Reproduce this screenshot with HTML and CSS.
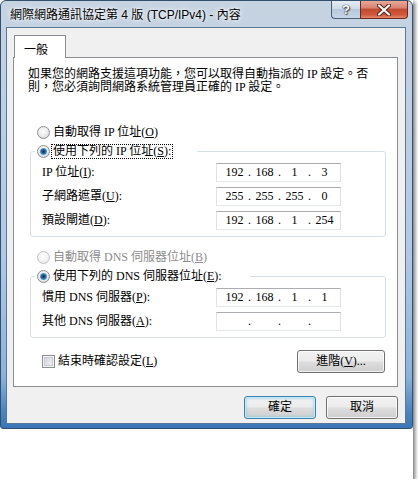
FILE: index.html
```html
<!DOCTYPE html>
<html lang="zh-Hant">
<head>
<meta charset="utf-8">
<title>TCP/IPv4 內容</title>
<link rel="stylesheet" href="styles.css">
</head>
<body>
<div class="shot">
  <div class="window">
    <div class="titlebar">
      <span class="title">網際網路通訊協定第 4 版 (TCP/IPv4) - 內容</span>
      <div class="cbtn help">?</div>
      <div class="cbtn close">
        <svg width="14" height="12" viewBox="0 0 14 12"><path d="M2 1.5 L12 10.5 M12 1.5 L2 10.5" stroke="#5b2216" stroke-width="4.2" stroke-linecap="round"/><path d="M2 1.5 L12 10.5 M12 1.5 L2 10.5" stroke="#fff" stroke-width="2.2" stroke-linecap="round"/></svg>
      </div>
    </div>
    <div class="client">
      <div class="tabstrip"><div class="tab">一般</div></div>
      <div class="panel">
        <p class="desc"><span>如果您的網路支援這項功能，您可以取得自動指派的 IP 設定。否</span><span>則，您必須詢問網路系統管理員正確的 IP 設定。</span></p>
        <div class="opt first"><span class="radio"></span><span class="otext">自動取得 IP 位址(<u>O</u>)</span></div>
        <fieldset class="group g1">
          <legend class="leg w1"><span class="opt"><span class="radio on"></span><span class="otext focus">使用下列的 IP 位址(<u>S</u>):</span></span></legend>
          <div class="rows">
            <span class="lbl">IP 位址(<u>I</u>):</span>
            <div class="ip"><span>192</span><i>.</i><span>168</span><i>.</i><span>1</span><i>.</i><span>3</span></div>
            <span class="lbl">子網路遮罩(<u>U</u>):</span>
            <div class="ip"><span>255</span><i>.</i><span>255</span><i>.</i><span>255</span><i>.</i><span>0</span></div>
            <span class="lbl">預設閘道(<u>D</u>):</span>
            <div class="ip"><span>192</span><i>.</i><span>168</span><i>.</i><span>1</span><i>.</i><span>254</span></div>
          </div>
        </fieldset>
        <div class="opt second disabled"><span class="radio off"></span><span class="otext">自動取得 DNS 伺服器位址(<u>B</u>)</span></div>
        <fieldset class="group g2">
          <legend class="leg w2"><span class="opt"><span class="radio on"></span><span class="otext">使用下列的 DNS 伺服器位址(<u>E</u>):</span></span></legend>
          <div class="rows">
            <span class="lbl">慣用 DNS 伺服器(<u>P</u>):</span>
            <div class="ip"><span>192</span><i>.</i><span>168</span><i>.</i><span>1</span><i>.</i><span>1</span></div>
            <span class="lbl">其他 DNS 伺服器(<u>A</u>):</span>
            <div class="ip"><span></span><i>.</i><span></span><i>.</i><span></span><i>.</i><span></span></div>
          </div>
        </fieldset>
        <div class="checkrow">
          <span class="check"></span><span class="ctext">結束時確認設定(<u>L</u>)</span>
          <div class="btn adv">進階(<u>V</u>)...</div>
        </div>
      </div>
      <div class="footer">
        <div class="btn default">確定</div>
        <div class="btn">取消</div>
      </div>
    </div>
  </div>
</div>
</body>
</html>
```
FILE: styles.css
```css
* { box-sizing: border-box; }
html, body { margin: 0; padding: 0; background: #fff; }
body {
  font-family: "Liberation Serif", "Noto Sans CJK TC", sans-serif;
  font-size: 12px;
  line-height: 13px;
  color: #000;
}
u { text-decoration: underline; text-underline-offset: 1px; }

.shot {
  width: 413px;
  height: 479px;
  background: #fff;
  box-shadow: 2px 2px 4px rgba(0, 0, 0, 0.55);
}

.window {
  height: 429px;
  border: 1px solid #34506f;
  border-radius: 6px 6px 3px 3px;
  background: linear-gradient(to bottom, #c6d3e1 0, #bfd0e3 20%, #b0c9e4 60%, #8cb2dc 88%, #4a84c2 96%, #3a76b8 100%);
  display: flex;
  flex-direction: column;
}

.titlebar {
  height: 26px;
  display: flex;
  align-items: flex-start;
  padding: 0 4px 0 9px;
}
.title {
  flex: 1;
  font-family: "Liberation Sans", "Noto Sans CJK TC", sans-serif;
  font-size: 12px;
  line-height: 14px;
  margin-top: 7px;
  color: #000;
  text-shadow: 0 0 6px #fff, 0 0 3px #fff;
  white-space: nowrap;
}
.cbtn {
  height: 18px;
  border: 1px solid #4a5f78;
  border-top: none;
  display: flex;
  align-items: center;
  justify-content: center;
}
.help {
  width: 29px;
  border-radius: 0 0 0 4px;
  border-right: none;
  background: linear-gradient(to bottom, #e5ecf4 0, #cfdbe8 45%, #b6c8dc 50%, #c6d6e8 100%);
  font-family: "Liberation Sans", sans-serif;
  font-weight: bold;
  font-size: 13px;
  color: #fff;
  text-shadow: 0 0 1px #333, 0 0 1px #333, 1px 1px 1px #555;
}
.close {
  width: 48px;
  border-radius: 0 0 4px 0;
  border-color: #6a2a1e;
  background: linear-gradient(to bottom, #e8a897 0, #d98372 40%, #c24a30 50%, #d0593d 80%, #e4876a 100%);
}

.client {
  flex: 1;
  margin: 0 6px 4px 5px;
  border: 1px solid #5b7696;
  background: #f0f0f0;
  display: flex;
  flex-direction: column;
}

.tabstrip {
  padding: 7px 0 0 7px;
  display: flex;
}
.tab {
  width: 52px;
  height: 23px;
  border: 1px solid #898c95;
  border-bottom: none;
  background: #fff;
  margin-bottom: -1px;
  position: relative;
  z-index: 1;
  font-family: "Noto Sans CJK TC", sans-serif;
  padding: 6px 0 0 9px;
  line-height: 13px;
}

.panel {
  margin: 0 7px 0 6px;
  height: 330px;
  border: 1px solid #898c95;
  background: #fff;
  display: flex;
  flex-direction: column;
  padding-bottom: 13px;
}

.desc {
  margin: 10px 0 0 14px;
  display: flex;
  flex-direction: column;
  white-space: nowrap;
}

.opt {
  display: flex;
  align-items: center;
  height: 13px;
  white-space: nowrap;
}
.opt.first { margin: 32px 0 0 23px; }
.opt.second { margin: 14px 0 0 23px; }
.otext { margin-left: 3px; }
.otext.focus {
  margin-left: 2px;
  outline: 1px dotted #000;
  outline-offset: 0;
  padding: 0 1px;
}
.disabled { color: #8d8d8d; }

.radio {
  width: 13px;
  height: 13px;
  flex: none;
  border-radius: 50%;
  border: 1px solid #8c8f94;
  background: radial-gradient(circle at 45% 40%, #fdfdfd 0, #eeeeee 45%, #c9cbce 100%);
  position: relative;
}
.radio.on::after {
  content: "";
  position: absolute;
  left: 2px;
  top: 2px;
  width: 7px;
  height: 7px;
  border-radius: 50%;
  background: radial-gradient(circle at 50% 50%, #13304f 0, #225a8f 35%, #4f9ad6 65%, #a8dcf8 100%);
}
.radio.off {
  border-color: #c0c2c5;
  background: radial-gradient(circle at 45% 40%, #fdfdfd 0, #f3f3f3 50%, #dedfe0 100%);
}

.group {
  margin: 6px 11px 0 16px;
  padding: 5px 0 6px 0;
  border: 1px solid #d5dfe5;
  border-radius: 3px;
  min-width: 0;
}
.leg {
  padding: 0;
  margin-left: 4px;
  height: 13px;
  background: #fff;
}
.leg .opt { padding-left: 2px; }
.w1 { width: 162px; }
.w2 { width: 215px; }

.rows {
  margin-left: 11px;
  display: grid;
  grid-template-columns: 174px 125px;
  row-gap: 5px;
  align-items: center;
}
.lbl { white-space: nowrap; line-height: 19px; }

.ip {
  height: 19px;
  border: 1px solid;
  border-color: #abadb3 #dbdfe6 #e3e9ef #e2e3ea;
  background: #fff;
  padding-left: 5px;
  display: grid;
  grid-template-columns: 25px 5px 25px 5px 25px 5px 25px;
  line-height: 17px;
  text-align: center;
}
.ip i { font-style: normal; }

.checkrow {
  margin: 11px 12px 0 28px;
  display: flex;
  align-items: center;
  height: 24px;
}
.check {
  width: 13px;
  height: 13px;
  flex: none;
  border: 1px solid #8e8f8f;
  background: #f4f4f4;
  box-shadow: inset 0 0 0 1px #f4f4f4, inset 0 0 0 2px #c7cbd1;
  background-image: linear-gradient(135deg, #cbcfd5 0, #f6f6f6 100%);
}
.ctext { margin-left: 3px; flex: 1; white-space: nowrap; }

.btn {
  height: 23px;
  border: 1px solid #707070;
  border-radius: 3px;
  background: linear-gradient(to bottom, #f2f2f2 0, #ebebeb 48%, #dddddd 52%, #cfcfcf 100%);
  box-shadow: inset 0 0 0 1px rgba(255, 255, 255, 0.75);
  display: flex;
  align-items: center;
  justify-content: center;
  white-space: nowrap;
}
.adv { width: 88px; }

.footer {
  display: flex;
  justify-content: flex-end;
  gap: 10px;
  padding: 9px 7px 0 0;
}
.footer .btn { width: 72px; }
.btn.default {
  border-color: #3c7fb1;
  box-shadow: inset 0 0 0 1px #c3e8fa, inset 0 0 2px 2px rgba(120, 200, 240, 0.45);
}
```
